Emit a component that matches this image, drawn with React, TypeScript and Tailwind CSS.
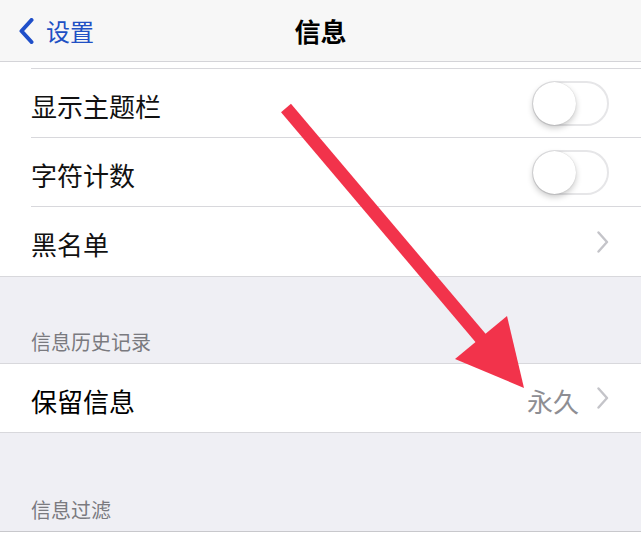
import React from "react";

const font = { fontFamily: '"Noto Sans CJK SC", "Noto Sans", sans-serif' };

const Chevron = () => (
  <svg width="12" height="22" viewBox="0 0 12 22" className="shrink-0">
    <path d="M1.5 1.5 L10 11 L1.5 20.5" fill="none" stroke="#c4c4c9" strokeWidth="2.4" strokeLinecap="round" strokeLinejoin="round" />
  </svg>
);

const Toggle = () => (
  <div className="relative w-[77px] h-[45px] rounded-full border-2 border-[#e6e6e8] bg-white shrink-0">
    <div className="absolute -left-[1px] -top-[1px] w-[43px] h-[43px] rounded-full bg-white shadow-[0_3px_6px_rgba(0,0,0,0.22),0_0_1px_rgba(0,0,0,0.2)]" />
  </div>
);

const Row = ({ label, right, last }: { label: string; right: React.ReactNode; last?: boolean }) => (
  <div className="pl-[31px] bg-white">
    <div className={`h-[69px] flex items-center justify-between pr-[32px] ${last ? "" : "border-b border-[#d8d8dc]"}`}>
      <span className="text-[26px] text-[#111] pt-[4px]">{label}</span>
      {right}
    </div>
  </div>
);

export default function App() {
  return (
    <div className="relative w-[641px] h-[542px] overflow-hidden bg-[#efeff4]" style={font}>
      {/* nav */}
      <div className="h-[62px] bg-[#f7f7f7] border-b border-[#d4d4d8] flex items-center relative">
        <div className="flex items-center pl-[19px] gap-[12px]">
          <svg width="15" height="26" viewBox="0 0 15 26">
            <path d="M12.5 2 L2.5 13 L12.5 24" fill="none" stroke="#1f4fc9" strokeWidth="4" strokeLinecap="round" strokeLinejoin="round" />
          </svg>
          <span className="text-[24px] text-[#2150c4] leading-none">设置</span>
        </div>
        <div className="absolute left-0 right-0 text-center text-[26px] font-bold text-black leading-none">信息</div>
      </div>

      {/* partial row */}
      <div className="bg-white pl-[31px]">
        <div className="h-[7px] border-b border-[#d8d8dc]" />
      </div>

      <Row label="显示主题栏" right={<Toggle />} />
      <Row label="字符计数" right={<Toggle />} />
      <Row label="黑名单" right={<Chevron />} last />

      <div className="border-t border-[#d8d8dc] h-[87px] flex items-end pl-[31px] pb-[11px]">
        <span className="text-[20px] text-[#7a7a7f] leading-none">信息历史记录</span>
      </div>

      <div className="border-t border-b border-[#d8d8dc] bg-white h-[70px] flex items-center justify-between pl-[31px] pr-[32px]">
        <span className="text-[26px] text-black pt-[4px]">保留信息</span>
        <div className="flex items-center gap-[18px]">
          <span className="text-[26px] text-[#8e8e93] pt-[4px]">永久</span>
          <Chevron />
        </div>
      </div>

      <div className="h-[98px] flex items-end pl-[31px] pb-[11px]">
        <span className="text-[20px] text-[#7a7a7f] leading-none">信息过滤</span>
      </div>
      <div className="border-t border-[#c8c8cc] bg-white h-[20px]" />

      {/* annotation arrow */}
      <svg className="absolute inset-0 pointer-events-none" width="641" height="542">
        <line x1="286" y1="108" x2="484" y2="342" stroke="#f2334b" strokeWidth="13" />
        <polygon points="455,359 507,316 524,388" fill="#f2334b" />
      </svg>
    </div>
  );
}
